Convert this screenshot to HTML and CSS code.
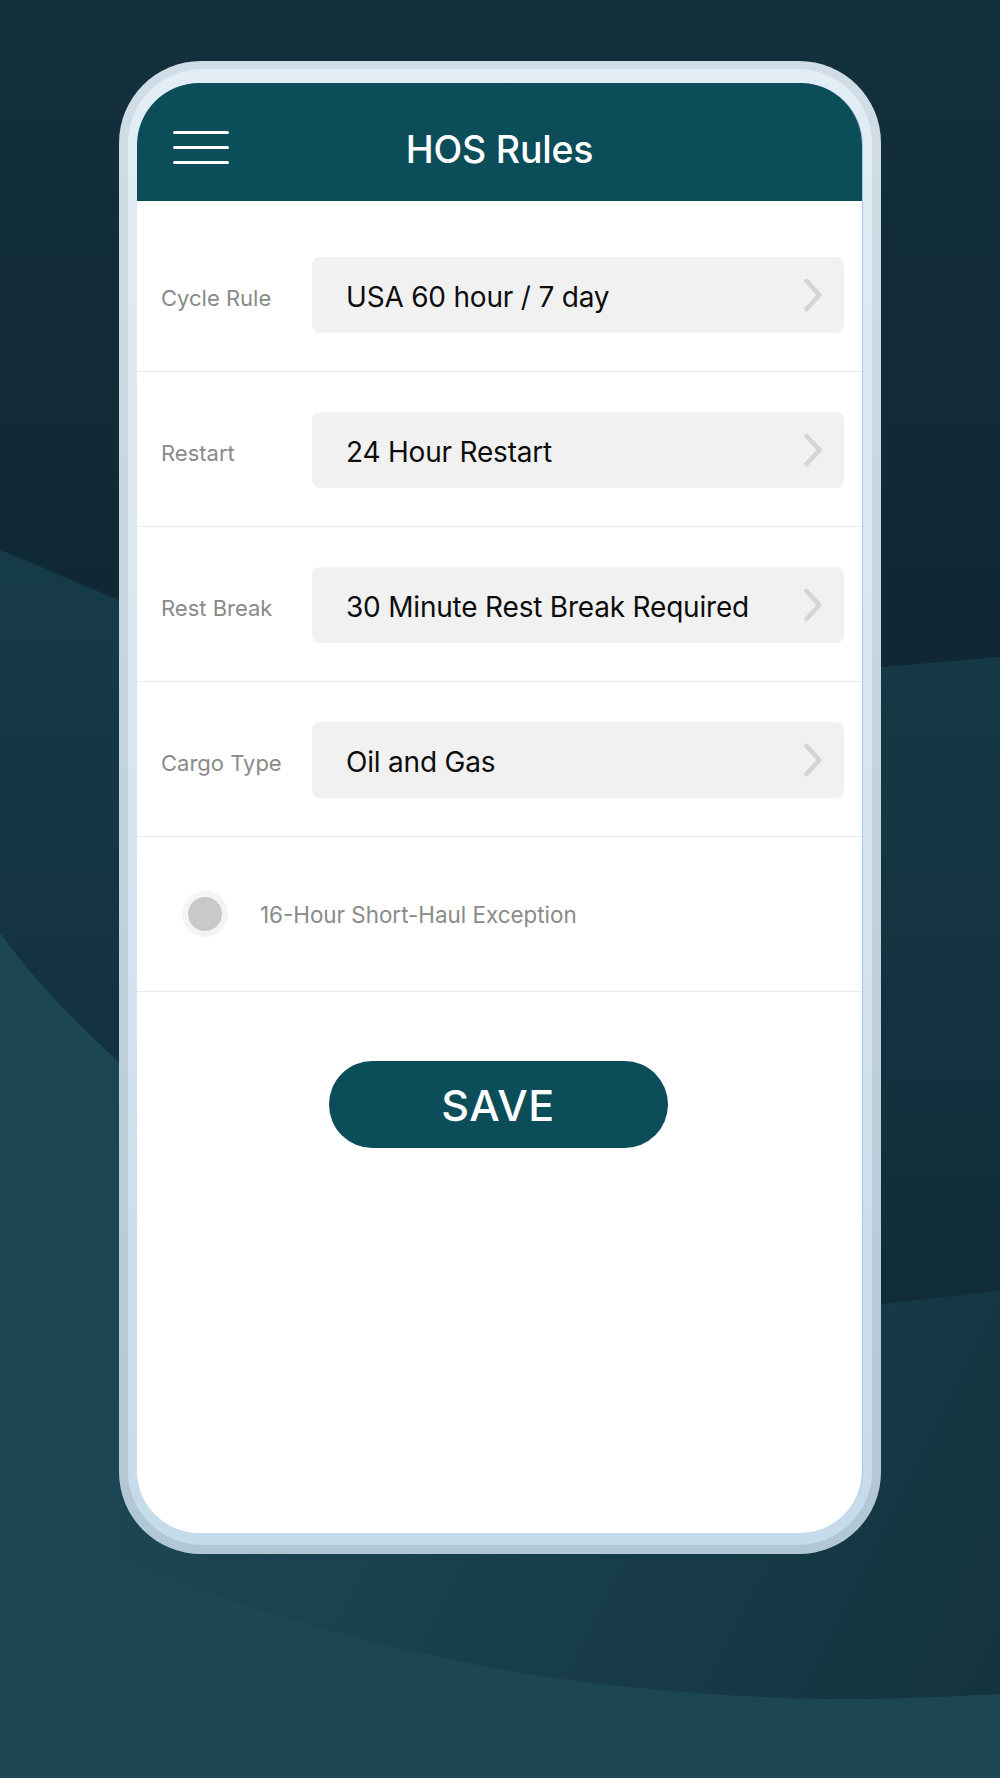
FILE: index.html
```html
<!DOCTYPE html>
<html lang="en">
<head>
<meta charset="utf-8">
<title>HOS Rules</title>
<link rel="stylesheet" href="styles.css">
</head>
<body>
<div class="stage">
  <svg class="backdrop" viewBox="0 0 1000 1778" preserveAspectRatio="none" aria-hidden="true">
    <defs>
      <linearGradient id="gTop" x1="0" y1="0" x2="0" y2="660" gradientUnits="userSpaceOnUse">
        <stop offset="0" stop-color="#13303d"/>
        <stop offset="1" stop-color="#0f2833"/>
      </linearGradient>
      <linearGradient id="gMid" x1="0" y1="560" x2="0" y2="1300" gradientUnits="userSpaceOnUse">
        <stop offset="0" stop-color="#163b48"/>
        <stop offset="1" stop-color="#112c39"/>
      </linearGradient>
      <linearGradient id="gLow" x1="300" y1="1300" x2="1000" y2="1650" gradientUnits="userSpaceOnUse">
        <stop offset="0" stop-color="#1b4553"/>
        <stop offset="1" stop-color="#13343f"/>
      </linearGradient>
    </defs>
    <rect width="1000" height="1778" fill="#1c4654"/>
    <path d="M120,1560 C250,1612 450,1672 640,1688 C720,1696 800,1700 870,1699 C920,1698 960,1696 1000,1694 V1280 H120 Z" fill="url(#gLow)"/>
    <path d="M0,520 L1000,600 L1000,1291 L882,1304 C500,1290 200,1150 119,1062 C80,1026 40,988 0,933 Z" fill="url(#gMid)"/>
    <path d="M0,0 H1000 V657 L882,667 L119,600 C80,584 40,566 0,550 Z" fill="url(#gTop)"/>
  </svg>

  <div class="phone-wrap">
    <div class="phone">
      <div class="bezel">
        <div class="screen">
          <header class="appbar">
            <button class="menu" type="button" aria-label="Menu">
              <span></span><span></span><span></span>
            </button>
            <h1 class="title">HOS Rules</h1>
            <span class="spacer"></span>
          </header>

          <div class="rules">
            <div class="rule-row">
              <span class="rule-label">Cycle Rule</span>
              <div class="select">
                <span class="select-value">USA 60 hour / 7 day</span>
                <svg class="chevron" viewBox="0 0 20 34" aria-hidden="true"><polyline points="3.5,3 16.5,17 3.5,31"/></svg>
              </div>
            </div>
            <div class="rule-row">
              <span class="rule-label">Restart</span>
              <div class="select">
                <span class="select-value">24 Hour Restart</span>
                <svg class="chevron" viewBox="0 0 20 34" aria-hidden="true"><polyline points="3.5,3 16.5,17 3.5,31"/></svg>
              </div>
            </div>
            <div class="rule-row">
              <span class="rule-label">Rest Break</span>
              <div class="select">
                <span class="select-value">30 Minute Rest Break Required</span>
                <svg class="chevron" viewBox="0 0 20 34" aria-hidden="true"><polyline points="3.5,3 16.5,17 3.5,31"/></svg>
              </div>
            </div>
            <div class="rule-row">
              <span class="rule-label">Cargo Type</span>
              <div class="select">
                <span class="select-value">Oil and Gas</span>
                <svg class="chevron" viewBox="0 0 20 34" aria-hidden="true"><polyline points="3.5,3 16.5,17 3.5,31"/></svg>
              </div>
            </div>
            <div class="toggle-row">
              <span class="radio"></span>
              <span class="toggle-label">16-Hour Short-Haul Exception</span>
            </div>
          </div>

          <div class="actions">
            <button class="save" type="button">SAVE</button>
          </div>
        </div>
      </div>
    </div>
  </div>
</div>
</body>
</html>
```

FILE: styles.css
```css
* { box-sizing: border-box; }

html, body {
  margin: 0;
  padding: 0;
}

body {
  font-family: Inter, "Noto Sans", "Liberation Sans", sans-serif;
  background: #1c4654;
}

.stage {
  display: grid;
  width: 1000px;
  height: 1778px;
  overflow: hidden;
}

.backdrop {
  grid-area: 1 / 1;
  display: block;
  width: 1000px;
  height: 1778px;
}

.phone-wrap {
  grid-area: 1 / 1;
  align-self: start;
  padding: 61px 0 0 119px;
}

.phone {
  width: 762px;
  padding: 8px 9px 9px 9px;
  border-radius: 82px;
  background: linear-gradient(180deg, #d0dde6 0%, #c3d3de 50%, #b2c7d4 100%);
}

.bezel {
  padding: 14px 9px 12px 9px;
  border-radius: 74px;
  background: linear-gradient(180deg, #e2edf5 0%, #d6e5f0 50%, #c6dbea 100%);
}

.screen {
  height: 1450px;
  border-radius: 62px;
  background: #ffffff;
  overflow: hidden;
  border-right: 1px solid #a9c7e5;
  display: flex;
  flex-direction: column;
}

/* App bar */
.appbar {
  height: 118px;
  flex: none;
  background: #0b4d59;
  display: grid;
  grid-template-columns: 1fr auto 1fr;
  align-items: center;
  padding: 10px 36px 0 36px;
}

.menu {
  justify-self: start;
  width: 56px;
  padding: 0;
  border: 0;
  background: none;
  display: flex;
  flex-direction: column;
  gap: 12px;
}

.menu span {
  display: block;
  height: 3px;
  border-radius: 2px;
  background: #ffffff;
}

.title {
  margin: 4px 0 0 0;
  font-size: 37.5px;
  font-weight: 500;
  line-height: 1.2;
  color: #ffffff;
  letter-spacing: -0.2px;
}

/* Rules list */
.rules {
  padding-top: 16px;
}

.rule-row {
  height: 155px;
  display: flex;
  align-items: center;
  padding: 2px 18px 0 24px;
  border-bottom: 1px solid #ebebeb;
}

.rule-label {
  width: 151px;
  flex: none;
  margin-top: 6px;
  font-size: 22px;
  color: #8a8a8a;
}

.select {
  flex: 1;
  height: 76px;
  border-radius: 8px;
  background: #f1f1f1;
  display: flex;
  align-items: center;
  justify-content: space-between;
  padding: 0 21px 0 34px;
}

.select-value {
  margin-top: 3px;
  font-size: 28px;
  color: #0d0d0d;
  letter-spacing: -0.2px;
}

.chevron {
  width: 20px;
  height: 34px;
  flex: none;
}

.chevron polyline {
  fill: none;
  stroke: #d4d4d4;
  stroke-width: 4.5;
  stroke-linecap: round;
  stroke-linejoin: round;
}

.toggle-row {
  height: 155px;
  display: flex;
  align-items: center;
  padding: 0 0 0 45px;
  border-bottom: 1px solid #ebebeb;
}

.radio {
  width: 46px;
  height: 46px;
  flex: none;
  border-radius: 50%;
  background: #c9c9c9;
  border: 6px solid #f4f4f4;
}

.toggle-label {
  margin-left: 32px;
  font-size: 22.4px;
  color: #8a8a8a;
}

/* Save */
.actions {
  padding-top: 69px;
  display: flex;
  justify-content: center;
}

.save {
  width: 339px;
  height: 87px;
  margin-right: 3px;
  border: 0;
  border-radius: 44px;
  background: #0b4d59;
  color: #ffffff;
  font-family: Inter, "Noto Sans", "Liberation Sans", sans-serif;
  font-size: 43px;
  font-weight: 500;
  letter-spacing: 0.5px;
}
```
